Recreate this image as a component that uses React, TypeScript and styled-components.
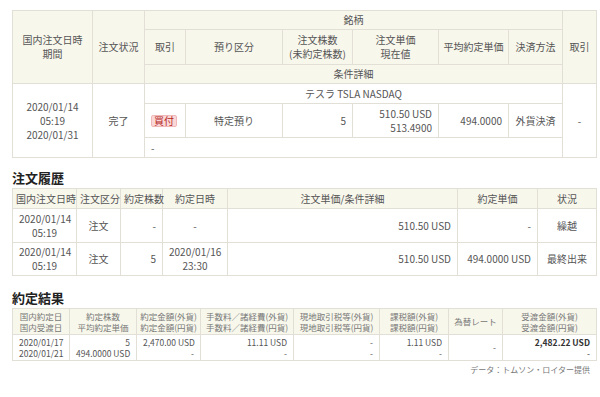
import React from "react";
import styled, { createGlobalStyle } from "styled-components";

const Global = createGlobalStyle`
  html, body { margin: 0; padding: 0; background: #fff; }
  body { font-family: "Noto Sans CJK JP", "Noto Sans", sans-serif; color: #555; }
`;

const Page = styled.div`
  width: 584px;
  padding: 10px 0 0 12px;
  display: flex;
  flex-direction: column;
`;

const Table = styled.table<{ $size?: number }>`
  width: 584px;
  table-layout: fixed;
  border-collapse: collapse;
  font-size: ${(p) => p.$size ?? 10}px;
  line-height: ${(p) => (p.$size ?? 10) + 4}px;
  color: #555;
`;

const Th = styled.th`
  background: #f8f7ec;
  border: 1px solid #e2e0d6;
  font-weight: normal;
  text-align: center;
  padding: 0 3px;
  color: #555;
  white-space: nowrap;
`;

const Td = styled.td<{ $align?: "left" | "right" | "center"; $bold?: boolean }>`
  border: 1px solid #e2e0d6;
  text-align: ${(p) => p.$align ?? "center"};
  padding: 0 6px;
  font-weight: ${(p) => (p.$bold ? "bold" : "normal")};
  color: ${(p) => (p.$bold ? "#333" : "#555")};
  white-space: nowrap;
`;

const Row = styled.tr<{ $h: number }>`
  height: ${(p) => p.$h}px;
`;

const Title = styled.h2<{ $top: number }>`
  margin: ${(p) => p.$top}px 0 2px;
  font-size: 13px;
  line-height: 16px;
  font-weight: bold;
  color: #222;
`;

const Badge = styled.span`
  display: inline-block;
  background: #fbd8d8;
  border: 1px solid #f0b8b8;
  border-radius: 2px;
  color: #b3261e;
  font-size: 10px;
  line-height: 10px;
  padding: 0 2px;
`;

const SmallTh = styled(Th)`
  color: #777;
  line-height: 11px;
`;

const SmallTd = styled(Td)`
  padding: 0 6px;
  line-height: 11px;
`;

const Plain = styled.span`
  font-weight: normal;
`;

const Note = styled.div`
  margin-top: 3px;
  text-align: right;
  padding-right: 6px;
  font-size: 8px;
  line-height: 12px;
  color: #777;
`;

const Cols = ({ widths }: { widths: number[] }) => (
  <colgroup>
    {widths.map((w, i) => (
      <col key={i} style={{ width: w }} />
    ))}
  </colgroup>
);

export default function App() {
  return (
    <>
      <Global />
      <Page>
        <Table $size={10}>
          <Cols widths={[80, 52, 41, 97, 70, 86, 70, 54, 34]} />
          <thead>
            <Row $h={19}>
              <Th rowSpan={3}>
                国内注文日時
                <br />
                期間
              </Th>
              <Th rowSpan={3}>注文状況</Th>
              <Th colSpan={6}>銘柄</Th>
              <Th rowSpan={3}>取引</Th>
            </Row>
            <Row $h={35}>
              <Th>取引</Th>
              <Th>預り区分</Th>
              <Th>
                注文株数
                <br />
                (未約定株数)
              </Th>
              <Th>
                注文単価
                <br />
                現在値
              </Th>
              <Th>平均約定単価</Th>
              <Th>決済方法</Th>
            </Row>
            <Row $h={19}>
              <Th colSpan={6}>条件詳細</Th>
            </Row>
          </thead>
          <tbody>
            <Row $h={20}>
              <Td rowSpan={3}>
                2020/01/14
                <br />
                05:19
                <br />
                2020/01/31
              </Td>
              <Td rowSpan={3}>完了</Td>
              <Td colSpan={6}>テスラ TSLA NASDAQ</Td>
              <Td rowSpan={3}>-</Td>
            </Row>
            <Row $h={34}>
              <Td $align="left">
                <Badge>買付</Badge>
              </Td>
              <Td>特定預り</Td>
              <Td $align="right">5</Td>
              <Td $align="right">
                510.50 USD
                <br />
                513.4900
              </Td>
              <Td $align="right">494.0000</Td>
              <Td>外貨決済</Td>
            </Row>
            <Row $h={20}>
              <Td colSpan={6} $align="left">
                -
              </Td>
            </Row>
          </tbody>
        </Table>

        <Title $top={12}>注文履歴</Title>
        <Table $size={10}>
          <Cols widths={[64, 44, 42, 65, 230, 80, 59]} />
          <thead>
            <Row $h={20}>
              <Th>国内注文日時</Th>
              <Th>注文区分</Th>
              <Th>約定株数</Th>
              <Th>約定日時</Th>
              <Th>注文単価/条件詳細</Th>
              <Th>約定単価</Th>
              <Th>状況</Th>
            </Row>
          </thead>
          <tbody>
            <Row $h={34}>
              <Td>
                2020/01/14
                <br />
                05:19
              </Td>
              <Td>注文</Td>
              <Td $align="right">-</Td>
              <Td>-</Td>
              <Td $align="right">510.50 USD</Td>
              <Td $align="right">-</Td>
              <Td>繰越</Td>
            </Row>
            <Row $h={33}>
              <Td>
                2020/01/14
                <br />
                05:19
              </Td>
              <Td>注文</Td>
              <Td $align="right">5</Td>
              <Td>
                2020/01/16
                <br />
                23:30
              </Td>
              <Td $align="right">510.50 USD</Td>
              <Td $align="right">494.0000 USD</Td>
              <Td>最終出来</Td>
            </Row>
          </tbody>
        </Table>

        <Title $top={14}>約定結果</Title>
        <Table $size={8.5}>
          <Cols widths={[57, 67, 64, 93, 86, 69, 54, 94]} />
          <thead>
            <Row $h={26}>
              <SmallTh>
                国内約定日
                <br />
                国内受渡日
              </SmallTh>
              <SmallTh>
                約定株数
                <br />
                平均約定単価
              </SmallTh>
              <SmallTh>
                約定金額(外貨)
                <br />
                約定金額(円貨)
              </SmallTh>
              <SmallTh>
                手数料／諸経費(外貨)
                <br />
                手数料／諸経費(円貨)
              </SmallTh>
              <SmallTh>
                現地取引税等(外貨)
                <br />
                現地取引税等(円貨)
              </SmallTh>
              <SmallTh>
                課税額(外貨)
                <br />
                課税額(円貨)
              </SmallTh>
              <SmallTh>為替レート</SmallTh>
              <SmallTh>
                受渡金額(外貨)
                <br />
                受渡金額(円貨)
              </SmallTh>
            </Row>
          </thead>
          <tbody>
            <Row $h={26}>
              <SmallTd>
                2020/01/17
                <br />
                2020/01/21
              </SmallTd>
              <SmallTd $align="right">
                5
                <br />
                494.0000 USD
              </SmallTd>
              <SmallTd $align="right">
                2,470.00 USD
                <br />-
              </SmallTd>
              <SmallTd $align="right">
                11.11 USD
                <br />-
              </SmallTd>
              <SmallTd $align="right">
                -
                <br />-
              </SmallTd>
              <SmallTd $align="right">
                1.11 USD
                <br />-
              </SmallTd>
              <SmallTd $align="right">-</SmallTd>
              <SmallTd $align="right" $bold>
                2,482.22 USD
                <br />
                <Plain>-</Plain>
              </SmallTd>
            </Row>
          </tbody>
        </Table>
        <Note>データ：トムソン・ロイター提供</Note>
      </Page>
    </>
  );
}
